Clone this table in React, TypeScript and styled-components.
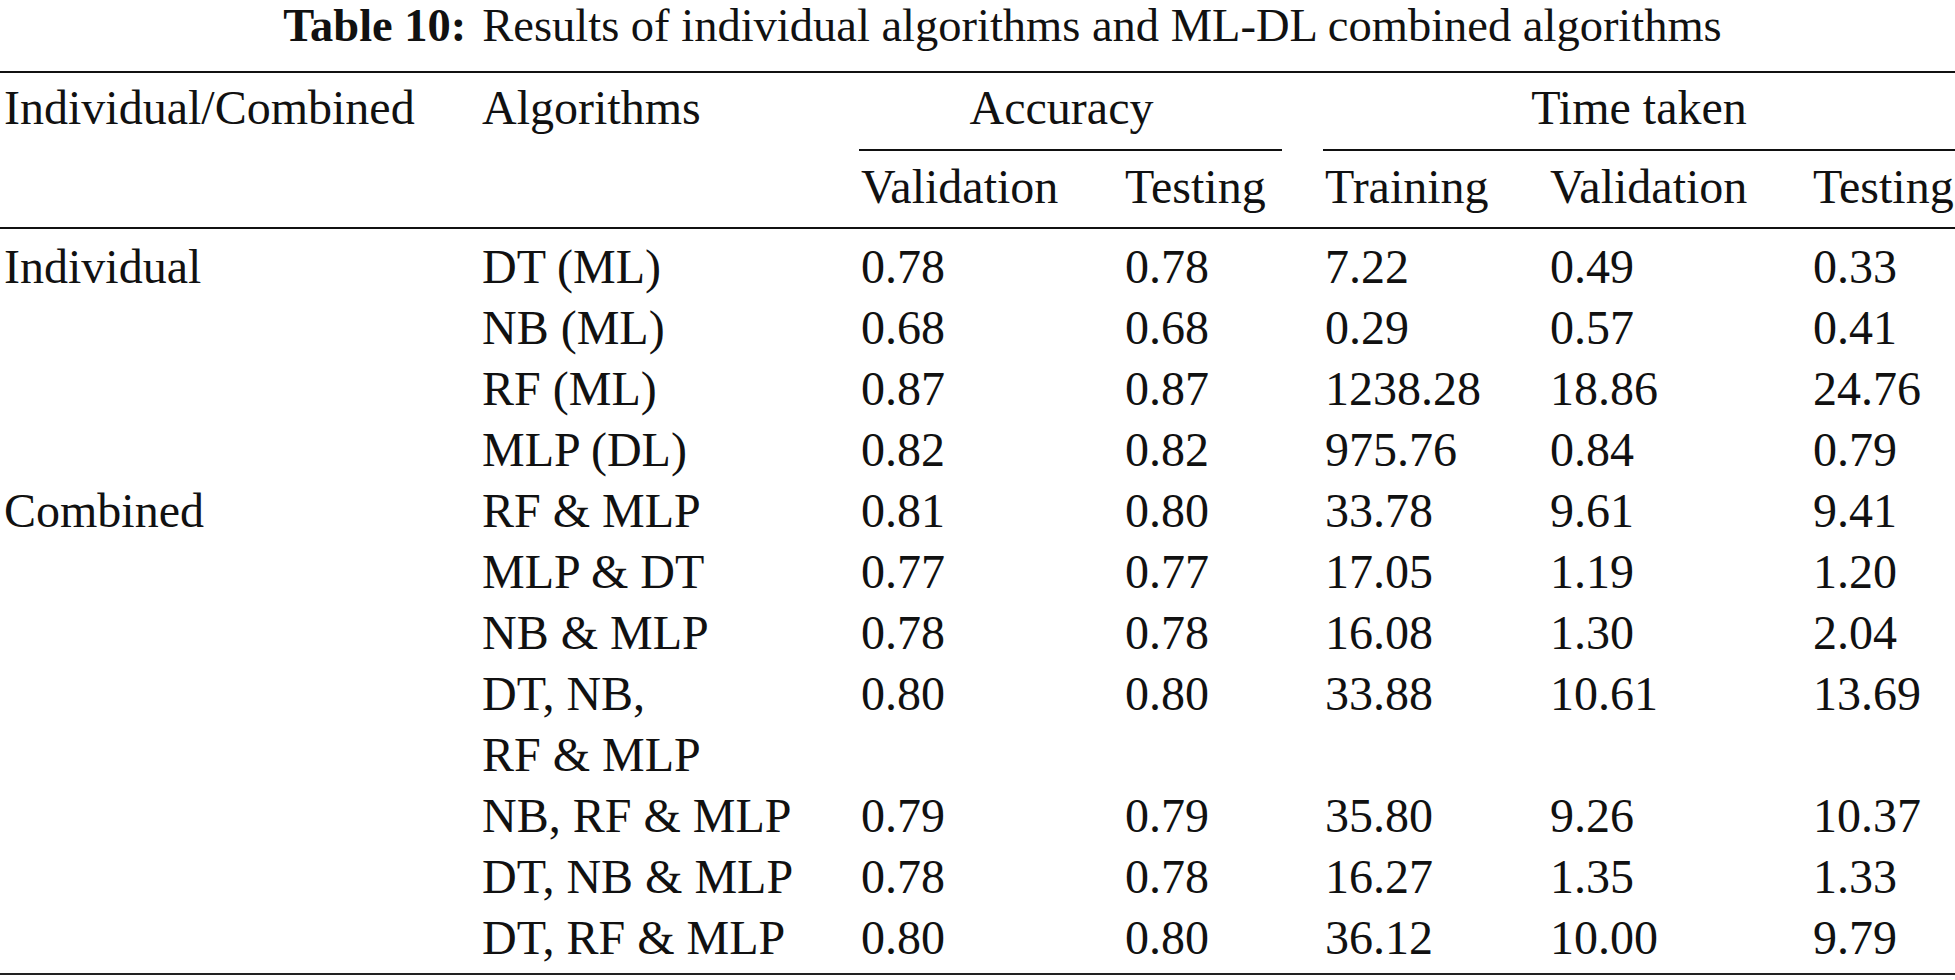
import React from 'react';
import styled, { createGlobalStyle } from 'styled-components';

const GlobalStyle = createGlobalStyle`
  html, body {
    margin: 0;
    padding: 0;
    background: #ffffff;
    overflow: hidden;
  }
  body {
    font-family: 'Liberation Serif', 'Times New Roman', serif;
    color: #111111;
  }
`;

const Page = styled.div`
  width: 1955px;
`;

const Caption = styled.div`
  height: 51px;
  line-height: 51px;
  font-size: 46.5px;
  text-align: center;
  padding-left: 50px;
  margin-bottom: 20px;
  white-space: nowrap;
`;

const CaptionLabel = styled.b`
  font-weight: 700;
  margin-right: 16px;
`;

const Table = styled.div`
  border-top: 2px solid #111;
  border-bottom: 2px solid #222;
  font-size: 48px;
  line-height: 61px;
`;

const cols = '478px 379px 264px 200px 225px 263px 146px';

const HeadGrid = styled.div`
  display: grid;
  grid-template-columns: ${cols};
  border-bottom: 2px solid #111;
`;

const BodyGrid = styled.div`
  display: grid;
  grid-template-columns: ${cols};
  padding: 7px 0 5px;
`;

const HeadCell = styled.div<{ $span?: number }>`
  padding: 4px 0 0 4px;
  white-space: nowrap;
  grid-row: span ${(p) => p.$span ?? 1};
`;

const GroupCell = styled.div<{ $cols: number; $trim: number; $nudge?: number }>`
  grid-column: span ${(p) => p.$cols};
  padding: 4px ${(p) => p.$nudge ?? 0}px 11px 0;
  margin: 0 ${(p) => p.$trim}px 0 2px;
  border-bottom: 2px solid #111;
  text-align: center;
  white-space: nowrap;
`;

const SubHead = styled.div`
  padding: 5px 0 10px 4px;
  white-space: nowrap;
`;

const Cell = styled.div`
  padding-left: 4px;
  white-space: nowrap;
`;

type Row = {
  group?: string;
  algo: string[];
  values: string[];
};

const rows: Row[] = [
  { group: 'Individual', algo: ['DT (ML)'], values: ['0.78', '0.78', '7.22', '0.49', '0.33'] },
  { algo: ['NB (ML)'], values: ['0.68', '0.68', '0.29', '0.57', '0.41'] },
  { algo: ['RF (ML)'], values: ['0.87', '0.87', '1238.28', '18.86', '24.76'] },
  { algo: ['MLP (DL)'], values: ['0.82', '0.82', '975.76', '0.84', '0.79'] },
  { group: 'Combined', algo: ['RF & MLP'], values: ['0.81', '0.80', '33.78', '9.61', '9.41'] },
  { algo: ['MLP & DT'], values: ['0.77', '0.77', '17.05', '1.19', '1.20'] },
  { algo: ['NB & MLP'], values: ['0.78', '0.78', '16.08', '1.30', '2.04'] },
  { algo: ['DT, NB,', 'RF & MLP'], values: ['0.80', '0.80', '33.88', '10.61', '13.69'] },
  { algo: ['NB, RF & MLP'], values: ['0.79', '0.79', '35.80', '9.26', '10.37'] },
  { algo: ['DT, NB & MLP'], values: ['0.78', '0.78', '16.27', '1.35', '1.33'] },
  { algo: ['DT, RF & MLP'], values: ['0.80', '0.80', '36.12', '10.00', '9.79'] },
];

export default function App() {
  return (
    <Page>
      <GlobalStyle />
      <Caption>
        <CaptionLabel>Table 10:</CaptionLabel>Results of individual algorithms and ML-DL combined algorithms
      </Caption>
      <Table>
        <HeadGrid>
          <HeadCell $span={2}>Individual/Combined</HeadCell>
          <HeadCell $span={2}>Algorithms</HeadCell>
          <GroupCell $cols={2} $trim={39} $nudge={18}>Accuracy</GroupCell>
          <GroupCell $cols={3} $trim={0}>Time taken</GroupCell>
          <SubHead>Validation</SubHead>
          <SubHead>Testing</SubHead>
          <SubHead>Training</SubHead>
          <SubHead>Validation</SubHead>
          <SubHead>Testing</SubHead>
        </HeadGrid>
        <BodyGrid>
          {rows.map((row, i) => (
            <React.Fragment key={i}>
              <Cell>{row.group ?? ''}</Cell>
              <Cell>
                {row.algo.map((line, j) => (
                  <div key={j}>{line}</div>
                ))}
              </Cell>
              {row.values.map((v, k) => (
                <Cell key={k}>{v}</Cell>
              ))}
            </React.Fragment>
          ))}
        </BodyGrid>
      </Table>
    </Page>
  );
}
